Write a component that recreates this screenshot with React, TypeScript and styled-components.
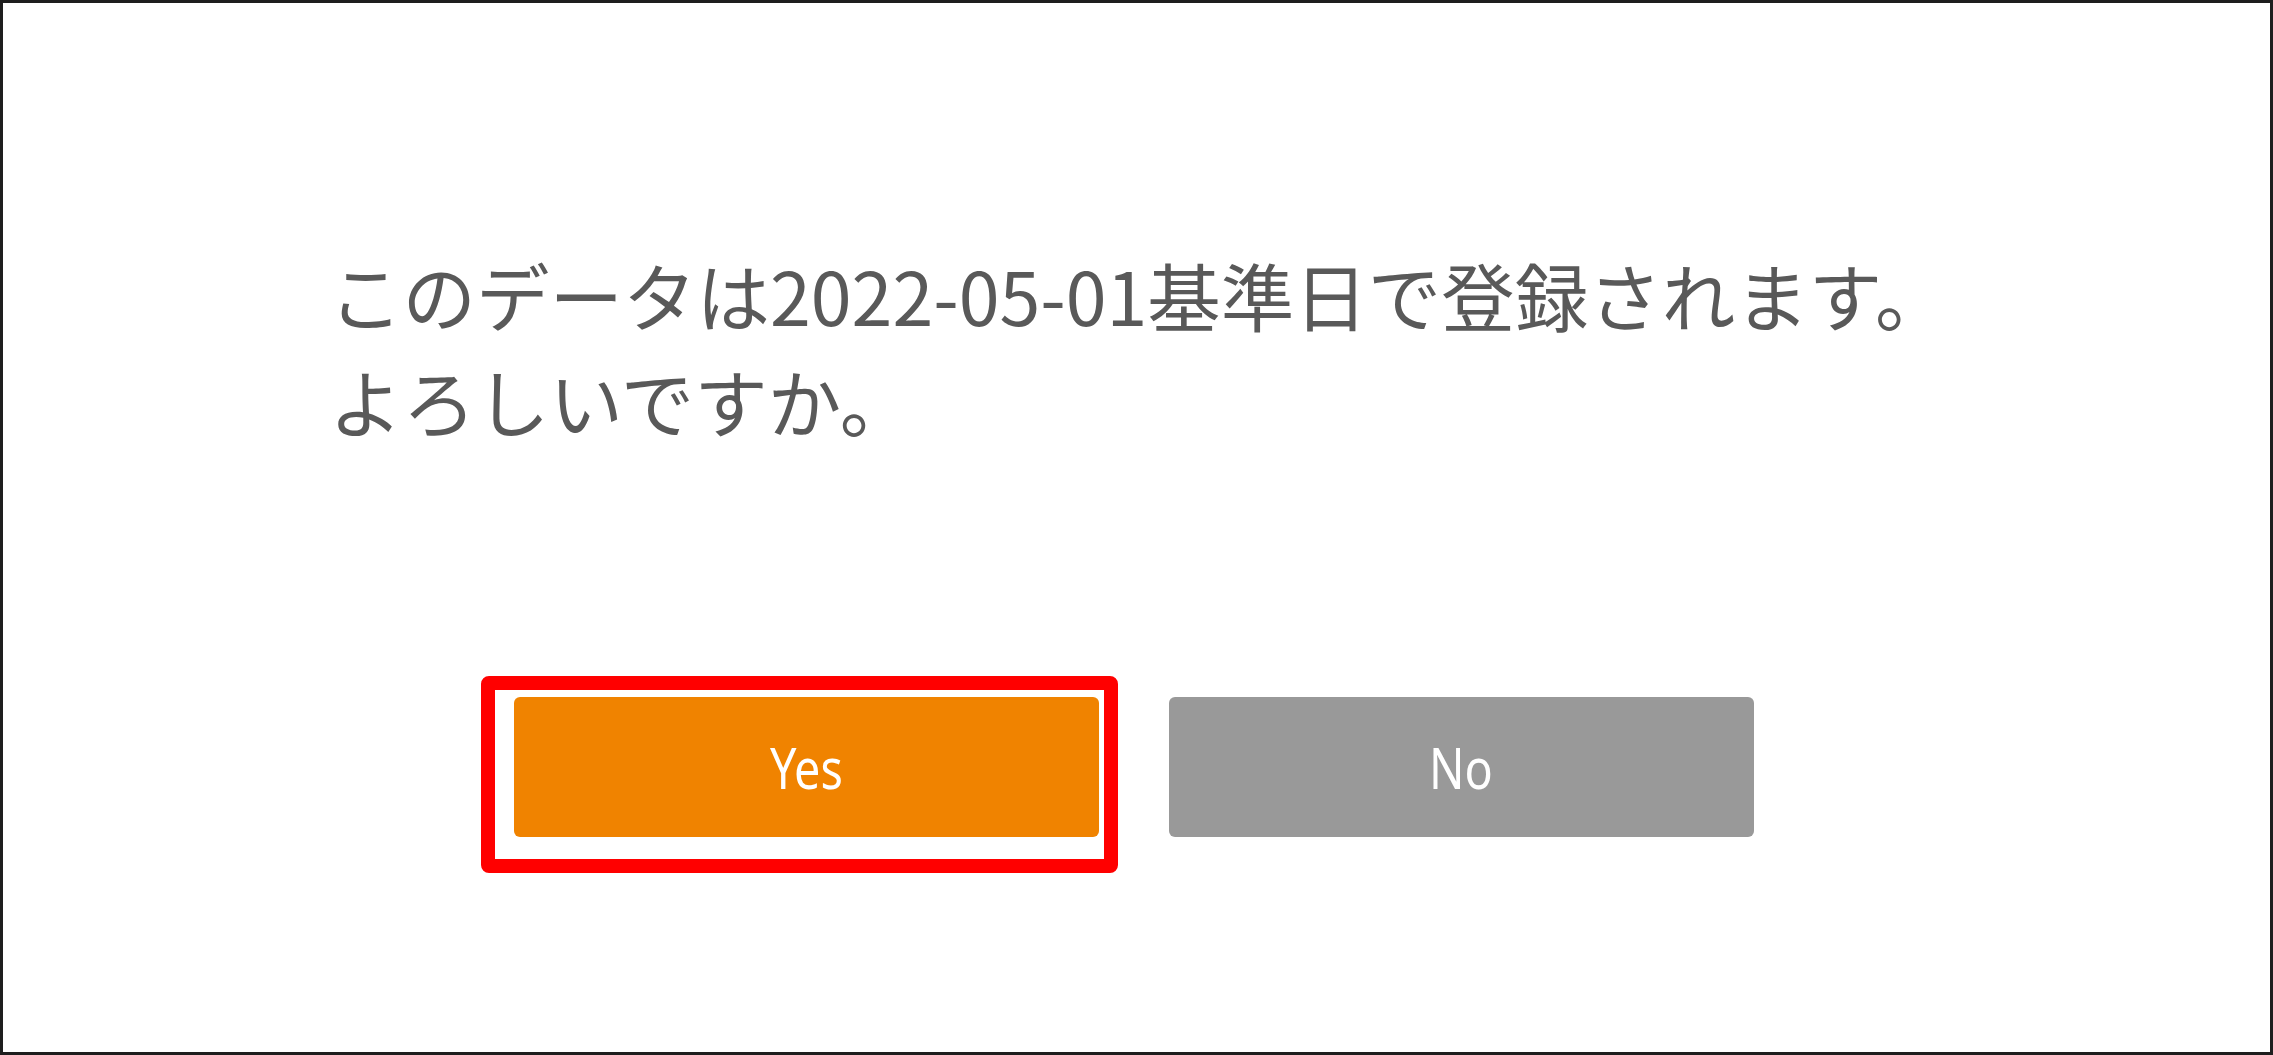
import React from "react";
import styled, { createGlobalStyle } from "styled-components";

const GlobalStyle = createGlobalStyle`
  html, body {
    margin: 0;
    padding: 0;
    background: #ffffff;
  }
  body {
    font-family: "Noto Sans CJK JP", "Noto Sans", sans-serif;
  }
`;

const Frame = styled.div`
  box-sizing: border-box;
  width: 100vw;
  height: 100vh;
  border: 3px solid #1e1e1e;
  background: #ffffff;
  display: flex;
  flex-direction: column;
`;

const Message = styled.p`
  margin: 0;
  padding: 238px 0 0 326px;
  font-family: "Noto Sans CJK JP", sans-serif;
  font-size: 73.5px;
  line-height: 106px;
  color: #595959;
`;

const ButtonRow = styled.div`
  display: flex;
  justify-content: center;
  gap: 70px;
  margin-top: 244px;
  padding-right: 6px;
`;

const Highlight = styled.div`
  position: relative;
`;

const Outline = styled.span`
  position: absolute;
  top: -21px;
  left: -33px;
  right: -19px;
  bottom: -36px;
  border: 14px solid #ff0000;
  border-radius: 8px;
  pointer-events: none;
`;

const Button = styled.button<{ $tone: "primary" | "secondary" }>`
  width: 585px;
  height: 140px;
  border: none;
  border-radius: 6px;
  background: ${(p) => (p.$tone === "primary" ? "#f08300" : "#999999")};
  color: #ffffff;
  font-family: "Noto Sans", "Liberation Sans", sans-serif;
  font-size: 57px;
  cursor: pointer;
  display: flex;
  align-items: center;
  justify-content: center;
  padding: 0;
`;

const Label = styled.span`
  display: inline-block;
  transform: scaleX(0.82);
`;

export default function App() {
  return (
    <>
      <GlobalStyle />
      <Frame>
        <Message>
          このデータは2022-05-01基準日で登録されます。
          <br />
          よろしいですか。
        </Message>
        <ButtonRow>
          <Highlight>
            <Button $tone="primary">
              <Label>Yes</Label>
            </Button>
            <Outline />
          </Highlight>
          <Button $tone="secondary">
            <Label>No</Label>
          </Button>
        </ButtonRow>
      </Frame>
    </>
  );
}
